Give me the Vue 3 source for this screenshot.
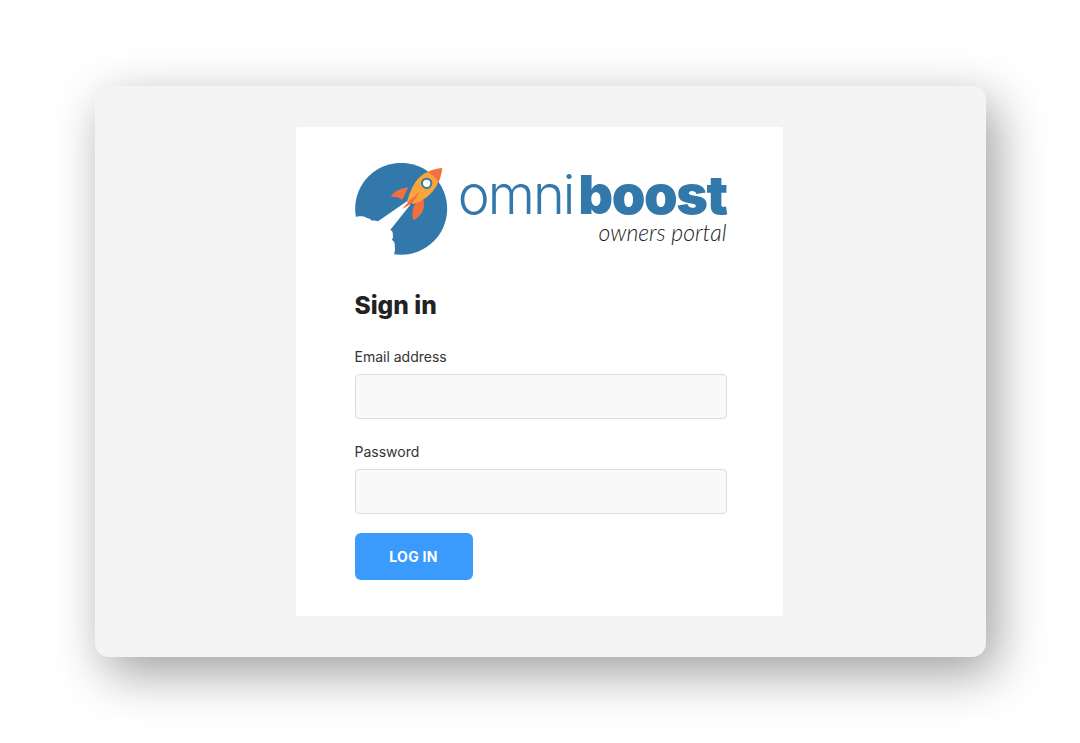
<script setup>
const fields = [
  { label: 'Email address', type: 'email' },
  { label: 'Password', type: 'password' }
]
</script>

<template>
  <main class="page">
    <section class="panel">
      <div class="card">
        <header class="logo">
          <svg class="mark" viewBox="30 40 282 276" aria-hidden="true">
            <circle cx="168.5" cy="177.5" r="138" fill="#3278aa" />
            <path d="M20 205 L31 203 Q40 198 46 200 Q58 198 66 205 Q74 205 81 213 Q90 212 99 215 L186 155 L196 165 L136 240 Q146 247 143 255 Q146 263 141 270 Q152 278 149 290 Q152 302 146 316 L20 330 Z" fill="#fff" />
            <path d="M137 143 Q150 118 190 113 L172 150 Q155 138 137 143 Z" fill="#f26f3f" />
            <path d="M205 212 Q195 180 217 152 L235 150 Q245 190 205 212 Z" fill="#f26f3f" />
            <path d="M292 56 Q250 58 222 84 Q200 106 186 155 L205 163 Q250 150 275 108 Q288 82 292 56 Z" fill="#f9a53b" />
            <path d="M292 56 Q268 57 249 68 Q268 78 281 98 Q289 78 292 56 Z" fill="#f26f3f" />
            <path d="M171 178 Q194 150 222 128 Q210 162 171 178 Z" fill="#f26f3f" />
            <circle cx="245" cy="101" r="14" fill="#fff" stroke="#3278aa" stroke-width="6" />
          </svg>
          <div class="wordmark">
            <div class="brand"><span class="thin">omni</span><span class="heavy">boost</span></div>
            <div class="tag">owners portal</div>
          </div>
        </header>

        <h1 class="title">Sign in</h1>

        <form class="form" @submit.prevent>
          <div v-for="field in fields" :key="field.label" class="field">
            <label class="label">{{ field.label }}</label>
            <input class="input" :type="field.type" />
          </div>
          <button class="submit" type="submit">LOG IN</button>
        </form>
      </div>
    </section>
  </main>
</template>

<style scoped>
.page {
  width: 1080px;
  height: 743px;
  box-sizing: border-box;
  padding: 86px 94px 86px 95px;
  background: #fff;
  overflow: hidden;
  font-family: Inter, "Open Sans", sans-serif;
}
.panel {
  height: 571px;
  box-sizing: border-box;
  padding-top: 41px;
  display: flex;
  justify-content: center;
  background: #f4f4f4;
  border-radius: 14px;
  box-shadow: 10px 16px 50px rgba(0, 0, 0, 0.38);
}
.card {
  width: 487px;
  height: 489px;
  box-sizing: border-box;
  margin-right: 3px;
  padding: 36px 56px 0 59px;
  background: #fff;
  border-radius: 3px;
}
.logo {
  display: flex;
  align-items: flex-start;
  height: 92px;
}
.mark {
  width: 94px;
  height: 92px;
  flex: none;
}
.wordmark {
  margin-left: 8px;
  flex: 1;
  min-width: 0;
  text-align: right;
  font-family: Inter, sans-serif;
}
.brand {
  height: 51px;
  margin-top: 6px;
  font-size: 54px;
  line-height: 52px;
  color: #3278aa;
  white-space: nowrap;
}
.thin {
  font-weight: 300;
  letter-spacing: -2px;
}
.heavy {
  font-weight: 900;
  letter-spacing: -1.5px;
  margin-left: 5px;
}
.tag {
  font-family: Lato, sans-serif;
  font-size: 23px;
  line-height: 24px;
  font-style: italic;
  font-weight: 300;
  color: #222;
}
.title {
  margin: 34px 0 0;
  font-size: 24.5px;
  line-height: 32px;
  font-weight: 800;
  color: #222;
}
.form {
  margin-top: 25px;
}
.field {
  margin-bottom: 22px;
}
.field:nth-of-type(2) {
  margin-bottom: 19px;
}
.label {
  display: block;
  margin-bottom: 6px;
  font-size: 14px;
  line-height: 22px;
  color: #333;
}
.input {
  display: block;
  width: 100%;
  height: 45px;
  box-sizing: border-box;
  background: #f9f9f9;
  border: 1px solid #dcdce0;
  border-radius: 4px;
}
.submit {
  display: block;
  width: 118px;
  height: 47px;
  background: #3a9bfd;
  color: #fff;
  border: 0;
  border-radius: 6px;
  font-family: Inter, sans-serif;
  font-size: 14px;
  font-weight: 700;
  letter-spacing: 0.3px;
}
</style>
